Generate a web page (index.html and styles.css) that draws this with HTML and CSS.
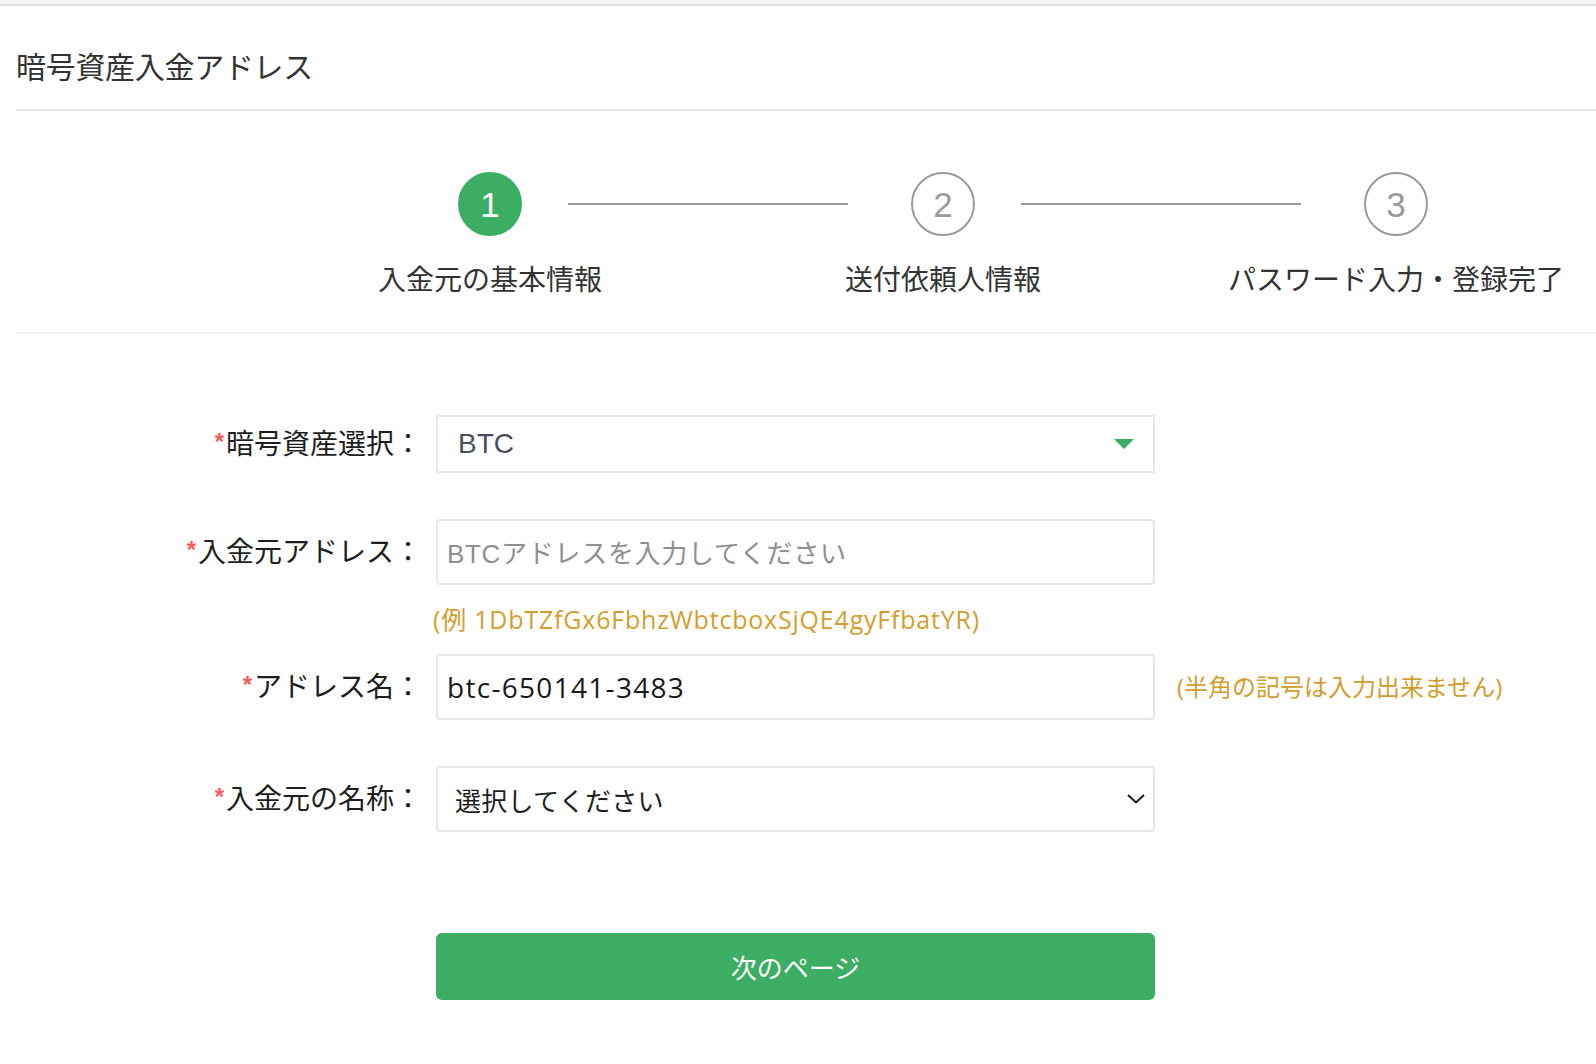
FILE: index.html
```html
<!DOCTYPE html>
<html lang="ja">
<head>
<meta charset="utf-8">
<title>暗号資産入金アドレス</title>
<link rel="stylesheet" href="styles.css">
</head>
<body>
<div class="topbar"></div>
<div class="page">
  <header class="page-head">
    <h1 class="title">暗号資産入金アドレス</h1>
  </header>

  <section class="steps">
    <div class="steps-row">
      <div class="step active">
        <div class="circle">1</div>
        <div class="step-label">入金元の基本情報</div>
      </div>
      <div class="step-line"></div>
      <div class="step">
        <div class="circle">2</div>
        <div class="step-label">送付依頼人情報</div>
      </div>
      <div class="step-line"></div>
      <div class="step">
        <div class="circle">3</div>
        <div class="step-label">パスワード入力・登録完了</div>
      </div>
    </div>
  </section>

  <form class="form">
    <div class="row row-first">
      <label class="label"><span class="req">*</span>暗号資産選択：</label>
      <div class="select select-coin">
        <span class="coin">BTC</span>
        <svg class="tri" width="20" height="10" viewBox="0 0 20 10"><polygon points="0,0 20,0 10,10" fill="#3bae63"/></svg>
      </div>
    </div>

    <div class="row">
      <label class="label"><span class="req">*</span>入金元アドレス：</label>
      <input class="field" type="text" placeholder="BTCアドレスを入力してください">
    </div>
    <div class="hint hint-below">(例 1DbTZfGx6FbhzWbtcboxSjQE4gyFfbatYR)</div>

    <div class="row row-name">
      <label class="label"><span class="req">*</span>アドレス名：</label>
      <input class="field field-value" type="text" value="btc-650141-3483">
      <span class="hint hint-side">(半角の記号は入力出来ません)</span>
    </div>

    <div class="row">
      <label class="label"><span class="req">*</span>入金元の名称：</label>
      <div class="select select-name">
        <span class="select-text">選択してください</span>
        <svg class="chev" width="18" height="10" viewBox="0 0 18 10"><polyline points="1,1 9,8.5 17,1" fill="none" stroke="#1a1a1a" stroke-width="2"/></svg>
      </div>
    </div>

    <button class="next" type="button">次のページ</button>
  </form>
</div>
</body>
</html>
```

FILE: styles.css
```css
html, body {
  margin: 0;
  padding: 0;
  background: #ffffff;
}

body {
  font-family: "Noto Sans CJK JP", "Noto Sans", sans-serif;
  color: #333333;
  overflow-x: hidden;
}

.topbar {
  height: 4px;
  background: #f5f6f8;
  border-bottom: 2px solid #e3e4e6;
}

.page {
  margin-left: 16px;
}

.page-head {
  padding: 39px 0 24px 0;
  border-bottom: 2px solid #e6e6e6;
}

.title {
  margin: 0;
  font-size: 30px;
  line-height: 40px;
  font-weight: 400;
  color: #333333;
  letter-spacing: -0.3px;
}

/* Steps */
.steps {
  padding: 61px 0 34px 0;
  border-bottom: 2px solid #f2f2f2;
}

.steps-row {
  display: flex;
  align-items: flex-start;
  margin-left: 442px;
}

.step {
  width: 64px;
  display: flex;
  flex-direction: column;
  align-items: center;
}

.circle {
  width: 64px;
  height: 64px;
  box-sizing: border-box;
  border-radius: 50%;
  border: 2px solid #9a9a9a;
  color: #9a9a9a;
  display: flex;
  align-items: center;
  justify-content: center;
  font-family: "Liberation Sans", "Noto Sans", sans-serif;
  font-size: 35px;
  line-height: 1;
}

.step.active .circle {
  background: #3bae63;
  border-color: #3bae63;
  color: #ffffff;
}

.step-label {
  margin-top: 22px;
  white-space: nowrap;
  font-size: 28px;
  line-height: 40px;
  color: #333333;
}

.step-line {
  width: 280px;
  height: 2px;
  background: #9a9a9a;
  margin: 31px 63px 0 46px;
}

/* Form */
.form {
  padding-top: 81px;
  padding-bottom: 40px;
}

.row {
  display: flex;
  align-items: center;
  margin-top: 46px;
}

.row-first {
  margin-top: 0;
}

.row-name {
  margin-top: 18px;
}

.label {
  width: 406px;
  margin-right: 14px;
  text-align: right;
  font-size: 28px;
  line-height: 40px;
  color: #1e1e1e;
  white-space: nowrap;
}

.req {
  color: #f25a5a;
  font-family: "Liberation Sans", sans-serif;
  font-weight: 700;
  font-size: 24px;
  position: relative;
  top: -4px;
  margin-right: 2px;
}

.select,
.field {
  width: 719px;
  box-sizing: border-box;
  border: 2px solid #e8e8e8;
  background: #ffffff;
}

.select {
  display: flex;
  align-items: center;
  justify-content: space-between;
}

.select-coin {
  height: 58px;
  padding: 0 19px 0 20px;
}

.coin {
  font-family: "Liberation Sans", sans-serif;
  font-size: 28px;
  color: #4a4e5a;
}

.tri {
  display: block;
}

.field {
  height: 66px;
  border-radius: 4px;
  padding: 0 9px;
  outline: none;
  font-family: "Open Sans", "Noto Sans CJK JP", sans-serif;
  font-size: 28px;
  color: #1a1a1a;
}

.field::placeholder {
  font-family: "Liberation Sans", "Noto Sans CJK JP", sans-serif;
  font-size: 26px;
  letter-spacing: 0.7px;
  color: #8f8f8f;
}

.field-value {
  letter-spacing: 1.3px;
}

.select-name {
  height: 66px;
  border-radius: 4px;
  padding: 0 8px 0 17px;
}

.select-text {
  font-size: 26px;
  color: #1e1e1e;
  letter-spacing: 0.3px;
}

.chev {
  display: block;
}

.hint {
  font-family: "Open Sans", "Noto Sans CJK JP", sans-serif;
  font-size: 24px;
  line-height: 34px;
  color: #d49e2c;
  white-space: nowrap;
}

.hint-below {
  margin: 17px 0 0 417px;
  font-size: 25px;
  letter-spacing: 0.8px;
}

.hint-side {
  margin-left: 22px;
}

.next {
  display: flex;
  align-items: center;
  justify-content: center;
  margin: 101px 0 0 420px;
  width: 719px;
  height: 67px;
  border: none;
  border-radius: 6px;
  background: #3bae63;
  color: #ffffff;
  font-family: "Noto Sans CJK JP", sans-serif;
  font-size: 26px;
  padding: 0;
}
```
